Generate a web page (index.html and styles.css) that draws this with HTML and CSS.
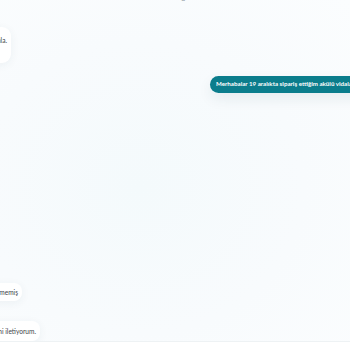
FILE: index.html
```html
<!DOCTYPE html>
<html lang="tr">
<head>
<meta charset="utf-8">
<link rel="stylesheet" href="styles.css">
</head>
<body>
<div class="page">
  <main class="chat">
    <div class="day">Bugün</div>
    <div class="row-in row-in-1">
      <div class="bubble in">
        <span class="line">Merhaba, size nasıl yardımcı olabilirim? Sipariş numaranızı paylaşırsanız hemen kontrol edeyim, iyi günler ve selamla.</span>
        <span class="line">Hepsiburada müşteri hizmetleri</span>
      </div>
    </div>
    <div class="row-out">
      <div class="bubble out">Merhabalar 19 aralıkta sipariş ettiğim akülü vidalama makinesi hâlâ elime ulaşmadı.</div>
    </div>
    <div class="spacer"></div>
    <div class="row-in row-in-2">
      <div class="bubble in">Kargo takip numarasında herhangi bir hareket görünmüyor, paket henüz teslim edilmemiş</div>
    </div>
    <div class="row-in row-in-3">
      <div class="bubble in">Siparişimin iptal edilip ücret iadesinin yapılması talebimi iletiyorum.</div>
    </div>
  </main>
  <footer class="composer"></footer>
</div>
</body>
</html>
```
FILE: styles.css
```css
html, body {
  margin: 0;
  padding: 0;
  width: 350px;
  height: 350px;
  overflow: hidden;
}
body {
  font-family: Lato, "Open Sans", "Liberation Sans", sans-serif;
  background: #f9fcfd;
}
.page {
  display: flex;
  flex-direction: column;
  height: 350px;
}
.chat {
  flex: 1;
  display: flex;
  flex-direction: column;
  background: radial-gradient(ellipse at 40% 55%, #f4fafc 0%, #f8fbfd 55%, #fbfdfe 100%);
}
.day {
  align-self: center;
  margin-top: -8px;
  margin-left: 16px;
  font-size: 7px;
  line-height: 10px;
  color: #8a949a;
}
.row-in {
  display: flex;
  justify-content: flex-end;
}
.row-in-1 { width: 11px; margin-top: 25px; }
.row-in-2 { width: 22px; }
.row-in-3 { width: 40px; margin-top: 20px; }
.row-out {
  display: flex;
  padding-left: 210px;
  margin-top: 13px;
}
.spacer { flex: 1; }
.bubble {
  flex-shrink: 0;
  white-space: nowrap;
  font-size: 6.6px;
  line-height: 10px;
}
.bubble.in {
  background: #ffffff;
  color: #3c4449;
  border-radius: 8px;
  box-shadow: 0 2px 10px rgba(40, 70, 90, 0.06);
  padding: 4px 4px 4px 10px;
}
.row-in-1 .bubble.in {
  padding: 8px 4px 8px 10px;
  border-radius: 9px;
}
.row-in-1 .line { display: block; }
.row-in-3 .bubble.in { padding: 5px 4px 5px 10px; }
.bubble.out {
  background: #0b7d8c;
  color: #ffffff;
  font-weight: 700;
  font-size: 6.2px;
  border-radius: 9px;
  padding: 3px 8px 4px 6px;
  box-shadow: 0 6px 14px rgba(30, 60, 80, 0.08);
}
.composer {
  height: 8px;
  flex-shrink: 0;
  border-top: 1px solid #eef2f4;
  background: #ffffff;
}
```
